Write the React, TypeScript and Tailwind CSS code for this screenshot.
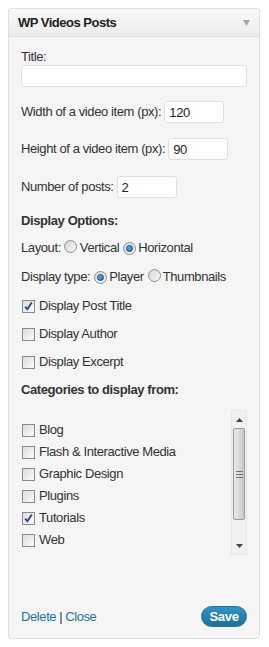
import React from 'react';

const font = "font-['Liberation_Sans',Arial,sans-serif]";

const Radio: React.FC<{ checked?: boolean }> = ({ checked }) => (
  <span className="relative inline-flex h-[13px] w-[13px] shrink-0 items-center justify-center rounded-full border border-[#8f8f8f] bg-gradient-to-br from-[#d6d6d6] to-[#f7f7f7]">
    {checked && (
      <span className="h-[7px] w-[7px] rounded-full border border-[#1c3f66] bg-gradient-to-br from-[#5fc1f2] to-[#1076b8]" />
    )}
  </span>
);

const Checkbox: React.FC<{ checked?: boolean }> = ({ checked }) => (
  <span className="relative ml-px inline-flex h-[13px] w-[13px] shrink-0 items-center justify-center border border-[#8a8a8a] bg-gradient-to-br from-[#dcdcdc] to-[#fbfbfb]">
    {checked && (
      <svg width="11" height="11" viewBox="0 0 11 11" className="absolute left-0 top-0">
        <path d="M2.2 5.6 L4.4 8.3 L8.8 1.6" fill="none" stroke="#2b3f8f" strokeWidth="1.8" />
      </svg>
    )}
  </span>
);

const SmallInput: React.FC<{ value: string }> = ({ value }) => (
  <input
    readOnly
    value={value}
    className={`h-[22px] w-[60px] rounded-[3px] border border-[#dfdfdf] bg-white pl-[4px] text-[13px] tracking-[-0.3px] text-[#222] outline-none ${font}`}
  />
);

const categories = [
  { name: 'Blog', checked: false },
  { name: 'Flash & Interactive Media', checked: false },
  { name: 'Graphic Design', checked: false },
  { name: 'Plugins', checked: false },
  { name: 'Tutorials', checked: true },
  { name: 'Web', checked: false },
];

export default function App() {
  return (
    <div className={`min-h-[647px] w-[269px] bg-white pl-2 pt-2 text-[13px] leading-4 tracking-[-0.4px] text-[#333] ${font}`}>
      <div className="w-[252px] rounded-[3px] border border-[#dfdfdf] bg-[#f5f5f5]">
        {/* header */}
        <div className="flex h-[28px] items-center justify-between rounded-t-[3px] border-b border-[#dfdfdf] bg-gradient-to-b from-[#f9f9f9] to-[#ececec] pl-[9px] pr-[9px]">
          <span className="text-[13px] font-bold tracking-[-0.5px] text-[#222]">WP Videos Posts</span>
          <svg width="7" height="6" viewBox="0 0 7 6">
            <path d="M0 0 H7 L3.5 6 Z" fill="#a8a8a8" />
          </svg>
        </div>

        {/* body */}
        <div className="px-3 pb-[11px] pt-[12px]">
          <div>Title:</div>
          <input
            readOnly
            className={`block h-[22px] w-[226px] rounded-[3px] border border-[#dfdfdf] bg-white outline-none ${font}`}
          />

          <div className="mt-[14px] flex h-[22px] items-center gap-[3px]">
            <span>Width of a video item (px):</span>
            <SmallInput value="120" />
          </div>
          <div className="mt-[15px] flex h-[22px] items-center gap-[3px]">
            <span>Height of a video item (px):</span>
            <SmallInput value="90" />
          </div>
          <div className="mt-[16px] flex h-[22px] items-center gap-[3px]">
            <span>Number of posts:</span>
            <SmallInput value="2" />
          </div>

          <div className="mt-[15px] font-bold">Display Options:</div>

          <div className="mt-[11px] flex h-4 items-center">
            <span>Layout:</span>
            <span className="ml-[3px]"><Radio /></span>
            <span className="ml-[3px]">Vertical</span>
            <span className="ml-[4px]"><Radio checked /></span>
            <span className="ml-[2px]">Horizontal</span>
          </div>
          <div className="mt-[13px] flex h-4 items-center">
            <span>Display type:</span>
            <span className="ml-[4px]"><Radio checked /></span>
            <span className="ml-[2px]">Player</span>
            <span className="ml-[4px]"><Radio /></span>
            <span className="ml-[2px]">Thumbnails</span>
          </div>

          <div className="mt-[13px] flex h-4 items-center gap-[4px]">
            <Checkbox checked />
            <span>Display Post Title</span>
          </div>
          <div className="mt-[12px] flex h-4 items-center gap-[4px]">
            <Checkbox />
            <span>Display Author</span>
          </div>
          <div className="mt-[12px] flex h-4 items-center gap-[4px]">
            <Checkbox />
            <span>Display Excerpt</span>
          </div>

          <div className="mt-[12px] font-bold">Categories to display from:</div>

          {/* category list with scrollbar */}
          <div className="mt-[12px] flex h-[145px]">
            <div className="flex-1 overflow-hidden pt-[9px]">
              {categories.map((c) => (
                <div key={c.name} className="flex h-[22px] items-center gap-[4px]">
                  <Checkbox checked={c.checked} />
                  <span>{c.name}</span>
                </div>
              ))}
            </div>
            <div className="flex w-[16px] flex-col border border-[#e6e6e6] bg-[#f0f0f0]">
              <div className="flex h-[17px] items-center justify-center">
                <svg width="7" height="4" viewBox="0 0 7 4">
                  <path d="M0 4 H7 L3.5 0 Z" fill="#444" />
                </svg>
              </div>
              <div className="mx-px flex h-[92px] flex-col items-center justify-center gap-[2px] rounded-[2px] border border-[#9a9a9a] bg-gradient-to-r from-[#e8e8e8] via-[#dadada] to-[#c8c8c8]">
                <div className="h-px w-[7px] bg-[#6f6f6f]" />
                <div className="h-px w-[7px] bg-[#6f6f6f]" />
                <div className="h-px w-[7px] bg-[#6f6f6f]" />
              </div>
              <div className="flex flex-1 items-end justify-center pb-[6px]">
                <svg width="7" height="4" viewBox="0 0 7 4">
                  <path d="M0 0 H7 L3.5 4 Z" fill="#444" />
                </svg>
              </div>
            </div>
          </div>

          {/* footer */}
          <div className="mt-[51px] flex h-[21px] items-center justify-between">
            <div>
              <a className="text-[#21759b]">Delete</a>
              <span className="mx-[3px] text-[#333]">|</span>
              <a className="text-[#21759b]">Close</a>
            </div>
            <button className="h-[21px] w-[46px] rounded-full border border-[#21759b] bg-gradient-to-b from-[#2e95c7] to-[#1f6f96] text-[13px] font-bold tracking-[-0.3px] text-white">
              Save
            </button>
          </div>
        </div>
      </div>
    </div>
  );
}
